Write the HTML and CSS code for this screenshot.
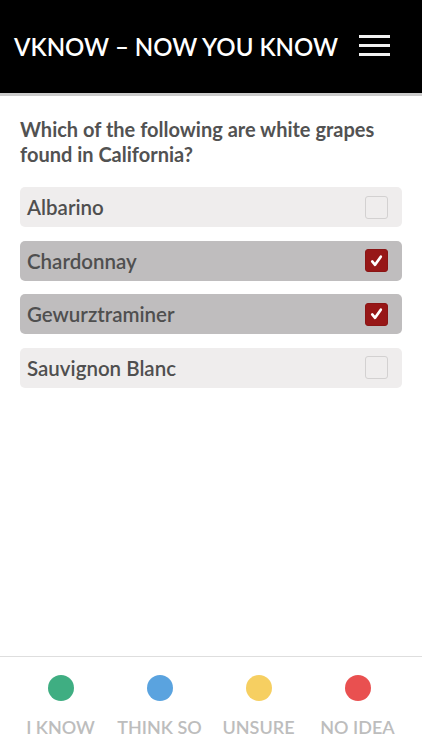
FILE: index.html
```html
<!DOCTYPE html>
<html>
<head>
<meta charset="utf-8">
<link rel="stylesheet" href="styles.css">
</head>
<body>
<div class="app">
  <header class="topbar">
    <h1 class="title">VKNOW – NOW YOU KNOW</h1>
    <div class="menu"><span></span><span></span><span></span></div>
  </header>
  <main class="content">
    <p class="question">Which of the following are white grapes found in California?</p>
    <ul class="options">
      <li class="option"><span>Albarino</span><span class="box"></span></li>
      <li class="option selected"><span>Chardonnay</span><span class="box checked"><svg viewBox="0 0 22 22" width="22" height="22"><path d="M6.5 11.5 L9.5 15 L15.5 6.5" fill="none" stroke="#fff" stroke-width="2.8" stroke-linecap="round" stroke-linejoin="round"/></svg></span></li>
      <li class="option selected"><span>Gewurztraminer</span><span class="box checked"><svg viewBox="0 0 22 22" width="22" height="22"><path d="M6.5 11.5 L9.5 15 L15.5 6.5" fill="none" stroke="#fff" stroke-width="2.8" stroke-linecap="round" stroke-linejoin="round"/></svg></span></li>
      <li class="option"><span>Sauvignon Blanc</span><span class="box"></span></li>
    </ul>
  </main>
  <footer class="answers">
    <div class="answer"><span class="dot green"></span><span class="label">I KNOW</span></div>
    <div class="answer"><span class="dot blue"></span><span class="label">THINK SO</span></div>
    <div class="answer"><span class="dot yellow"></span><span class="label">UNSURE</span></div>
    <div class="answer"><span class="dot red"></span><span class="label">NO IDEA</span></div>
  </footer>
</div>
</body>
</html>
```
FILE: styles.css
```css
* { box-sizing: border-box; }
html, body { margin: 0; padding: 0; background: #fff; }
body { font-family: Lato, "Liberation Sans", sans-serif; }
.app { width: 422px; height: 750px; display: flex; flex-direction: column; }
.topbar {
  height: 96px;
  background: #000;
  border-bottom: 3px solid #cbcbcb;
  display: flex;
  align-items: center;
  justify-content: space-between;
  padding: 0 32px 0 14px;
}
.title {
  margin: 0;
  color: #fff;
  font-size: 24px;
  font-weight: 600;
  letter-spacing: 0;
  margin-top: -1px;
}
.menu { display: flex; flex-direction: column; gap: 6px; width: 31px; margin-top: -2px; }
.menu span { display: block; height: 3px; background: #f2f2f2; }
.content { flex: 1; padding: 21px 20px 0 20px; }
.question {
  margin: 0 0 20px 0;
  padding-right: 8px;
  color: #525252;
  font-size: 20px;
  font-weight: 700;
  line-height: 25px;
}
.options { list-style: none; margin: 0; padding: 0; display: flex; flex-direction: column; gap: 13.5px; }
.option {
  height: 40px;
  border-radius: 5px;
  background: #efeded;
  display: flex;
  align-items: center;
  justify-content: space-between;
  padding: 0 14px 0 7px;
  color: #4f4f4f;
  font-size: 20.5px;
  font-weight: 600;
}
.option.selected { background: #bfbdbe; }
.box {
  width: 23px; height: 23px;
  border-radius: 3px;
  border: 1px solid #d3d1d1;
  background: #efeded;
  display: flex; align-items: center; justify-content: center;
}
.box.checked { background: #971717; border-color: #8a1515; }
.box svg { display: block; }
.answers {
  height: 94px;
  border-top: 1px solid #dedede;
  display: grid;
  grid-template-columns: repeat(4, 99px);
  padding: 18px 0 0 11px;
}
.answer { display: flex; flex-direction: column; align-items: center; }
.dot { width: 26px; height: 26px; border-radius: 50%; display: block; }
.green { background: #3fae82; }
.blue { background: #5aa3df; }
.yellow { background: #f6cf61; }
.red { background: #e95050; }
.label {
  margin-top: 15px;
  color: #bdbdbd;
  font-size: 18px;
  font-weight: 600;
  letter-spacing: 0;
  white-space: nowrap;
}
```
